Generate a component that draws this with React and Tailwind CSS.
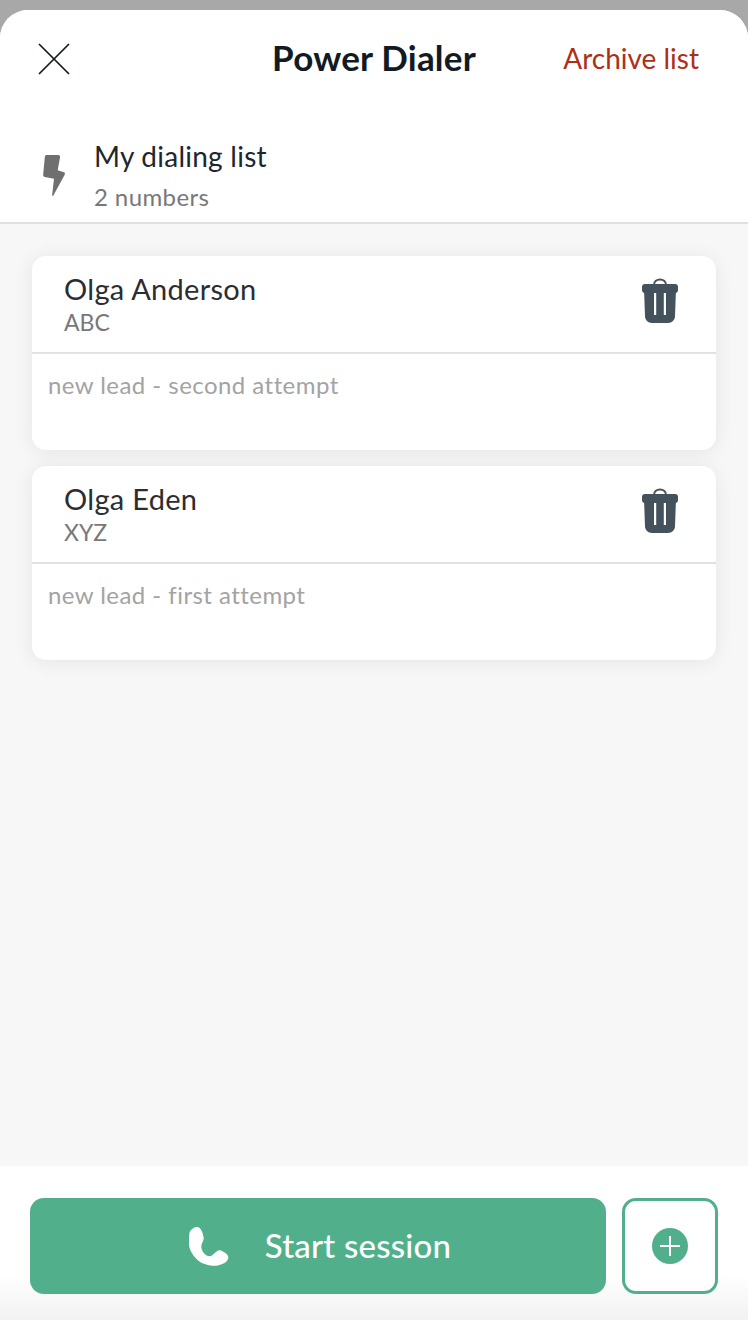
const font = { fontFamily: '"Lato", "Liberation Sans", sans-serif' };

function Trash() {
  return (
    <svg width="38" height="46" viewBox="0 0 38 46">
      <path d="M13 8 C13 0.5 25 0.5 25 8" fill="none" stroke="#44525d" strokeWidth="2" />
      <rect x="1" y="7" width="36" height="9" rx="3" fill="#44525d" />
      <path d="M3 12 H35 L34 39 C34 43 31 46 27 46 H11 C7 46 4 43 4 39 Z" fill="#44525d" />
      <rect x="13" y="16" width="2.2" height="22" fill="#fff" />
      <rect x="22.8" y="16" width="2.2" height="22" fill="#fff" />
    </svg>
  );
}

function LeadCard({ name, company, note }) {
  return (
    <div className="h-[194px] rounded-[14px] bg-white shadow-[0_2px_20px_rgba(0,0,0,0.08)]">
      <div className="flex h-[98px] justify-between border-b-2 border-[#e2e2e2] pl-8 pr-[37px]">
        <div className="pt-[15px]">
          <div className="text-[29px] leading-[36px] tracking-[0.3px] text-[#2b2d30]">{name}</div>
          <div className="text-[23px] leading-[30px] text-[#77787a]">{company}</div>
        </div>
        <div className="pt-[21px]">
          <Trash />
        </div>
      </div>
      <div className="pl-4 pt-[16px] text-[24px] leading-[30px] tracking-[0.45px] text-[#a3a3a3]">{note}</div>
    </div>
  );
}

export default function App() {
  return (
    <div style={font} className="flex h-[1320px] w-[748px] flex-col overflow-hidden bg-[#a8a8a8] pt-[10px]">
      <div className="flex min-h-0 flex-1 flex-col overflow-hidden rounded-t-[28px] bg-[#f7f7f7]">
        <div className="h-[214px] border-b-2 border-[#e0e0e0] bg-white">
          <div className="mb-[29px] grid h-[96px] grid-cols-[1fr_auto_1fr] items-center pl-[38px] pr-[49px]">
            <svg width="32" height="32" viewBox="0 0 32 32" className="mt-[2px]">
              <path d="M1 1 L31 31 M31 1 L1 31" stroke="#14191f" strokeWidth="1.7" />
            </svg>
            <div className="-mt-[3px] pl-[11px] text-[35px] font-bold leading-[40px] tracking-[0.2px] text-[#121a24]">Power Dialer</div>
            <div className="text-right text-[28px] leading-[36px] text-[#ad2f17]">Archive list</div>
          </div>
          <div className="flex">
            <div className="w-[94px] pl-[43px] pt-[19px]">
              <svg width="22" height="42" viewBox="0 0 24 44" preserveAspectRatio="none">
                <path d="M4 1 H16 C18 1 19 2 18.5 4 L16 17 L23 19 C24 19 24 21 23.5 22 L11 44 C10.5 44.5 10 44 10 43 L12 26 L2 24 C0.5 24 0 23 0.2 21.5 L2 3 C2.2 1.5 3 1 4 1 Z" fill="#6f6f6f" />
              </svg>
            </div>
            <div>
              <div className="pt-[3px] text-[28px] leading-[36px] tracking-[0.25px] text-[#20262e]">My dialing list</div>
              <div className="pt-[8px] text-[24px] leading-[30px] tracking-[0.4px] text-[#77787a]">2 numbers</div>
            </div>
          </div>
        </div>

        <div className="flex flex-1 flex-col gap-4 pl-8 pr-8 pt-8">
          <LeadCard name="Olga Anderson" company="ABC" note="new lead - second attempt" />
          <LeadCard name="Olga Eden" company="XYZ" note="new lead - first attempt" />
        </div>

        <div className="flex h-[154px] gap-4 bg-gradient-to-b from-white from-70% to-[#f2f2f2] pl-[30px] pr-[30px] pt-8">
          <button className="flex h-[96px] w-[576px] items-center justify-center gap-[36px] rounded-[14px] bg-[#51b08b] pl-[4px] text-[33px] font-medium tracking-[0.2px] text-white">
            <svg width="40" height="39" viewBox="0 0 40 39">
              <path d="M9 0 C12 1 14 6 14.7 10.7 C15 14 12 16 12.3 20 C12.5 24 16 29 20.7 29.3 C24 29.5 27 23 30.7 23.3 C34 24 39 27 39.3 30 C39.5 33 37 36 34 36.7 C31 38 27 39 24 38.7 C17 38 11 36 7.3 31.7 C3 27 0 22 0 16.7 C0 11 0 8 0.7 5 C2 2 6 -0.5 9 0 Z" fill="#fff" />
            </svg>
            <span>Start session</span>
          </button>
          <button className="flex h-[96px] w-[96px] items-center justify-center rounded-[14px] border-[3px] border-[#51b08b] bg-white/60">
            <svg width="36" height="36" viewBox="0 0 36 36">
              <circle cx="18" cy="18" r="18" fill="#51b08b" />
              <path d="M18 8 V28 M8 18 H28" stroke="#fff" strokeWidth="2" />
            </svg>
          </button>
        </div>
      </div>
    </div>
  );
}
